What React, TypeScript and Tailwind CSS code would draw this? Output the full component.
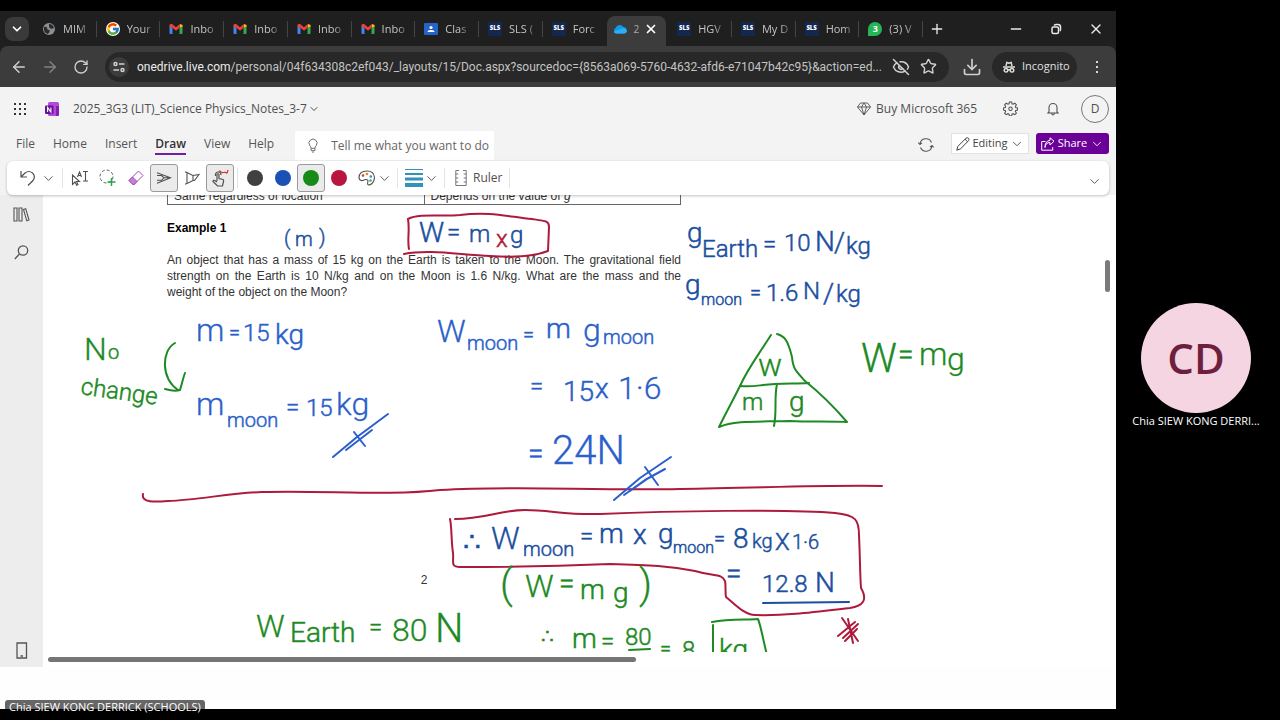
import type { ReactNode } from "react";
import { ArrowLeft, ArrowRight, ChevronDown, Download, EyeOff, Minus, Plus, RotateCw, Star, X } from "lucide-react";
import { FcGoogle } from "react-icons/fc";

// Pen colours available in the Draw ribbon
const NAVY = "#1b4f9f";
const BLUE = "#2b5fcb";
const GREEN = "#1d8a24";
const RED = "#ad1a3c";

type Ink = { t: string; x: number; y: number; s: number; c: string; r?: number };

// Handwritten notes on the page, in canvas coordinates
const notes: Ink[] = [
  { t: "(", x: 284, y: 245, s: 20, c: NAVY },
  { t: "m", x: 295, y: 246, s: 20, c: NAVY },
  { t: ")", x: 319, y: 244, s: 20, c: NAVY },

  { t: "W", x: 419, y: 242, s: 28, c: NAVY },
  { t: "=", x: 447, y: 240, s: 24, c: NAVY },
  { t: "m", x: 469, y: 242, s: 24, c: NAVY },
  { t: "x", x: 496, y: 247, s: 24, c: RED },
  { t: "g", x: 510, y: 243, s: 24, c: NAVY },

  { t: "g", x: 687, y: 242, s: 28, c: NAVY },
  { t: "Earth", x: 702, y: 257, s: 24, c: NAVY },
  { t: "=", x: 763, y: 252, s: 24, c: NAVY },
  { t: "10", x: 784, y: 251, s: 24, c: NAVY },
  { t: "N", x: 815, y: 251, s: 28, c: NAVY },
  { t: "/", x: 834, y: 252, s: 28, c: NAVY },
  { t: "kg", x: 846, y: 254, s: 24, c: NAVY },

  { t: "g", x: 685, y: 294, s: 28, c: NAVY },
  { t: "moon", x: 701, y: 305, s: 16, c: NAVY },
  { t: "=", x: 750, y: 299, s: 20, c: NAVY },
  { t: "1.6", x: 766, y: 301, s: 24, c: NAVY },
  { t: "N", x: 803, y: 299, s: 24, c: NAVY },
  { t: "/", x: 823, y: 303, s: 28, c: NAVY },
  { t: "kg", x: 836, y: 302, s: 24, c: NAVY },

  { t: "m", x: 196, y: 341, s: 32, c: BLUE },
  { t: "=", x: 229, y: 339, s: 20, c: BLUE },
  { t: "15", x: 243, y: 341, s: 24, c: BLUE },
  { t: "kg", x: 275, y: 344, s: 28, c: BLUE },

  { t: "m", x: 196, y: 415, s: 32, c: BLUE },
  { t: "moon", x: 227, y: 427, s: 20, c: BLUE },
  { t: "=", x: 286, y: 415, s: 24, c: BLUE },
  { t: "15", x: 306, y: 416, s: 24, c: BLUE },
  { t: "kg", x: 336, y: 415, s: 32, c: BLUE },

  { t: "W", x: 437, y: 342, s: 32, c: BLUE },
  { t: "moon", x: 467, y: 350, s: 20, c: BLUE },
  { t: "=", x: 523, y: 341, s: 20, c: BLUE },
  { t: "m", x: 546, y: 338, s: 28, c: BLUE },
  { t: "g", x: 583, y: 341, s: 32, c: BLUE },
  { t: "moon", x: 603, y: 344, s: 20, c: BLUE },

  { t: "=", x: 530, y: 394, s: 24, c: BLUE },
  { t: "15", x: 563, y: 401, s: 28, c: BLUE },
  { t: "x", x: 595, y: 398, s: 28, c: BLUE },
  { t: "1·6", x: 618, y: 399, s: 32, c: BLUE },

  { t: "=", x: 528, y: 463, s: 28, c: BLUE },
  { t: "24N", x: 552, y: 464, s: 40, c: BLUE },

  { t: "N", x: 84, y: 360, s: 32, c: GREEN },
  { t: "o", x: 108, y: 359, s: 20, c: GREEN },
  { t: "change", x: 80, y: 394, s: 24, c: GREEN, r: 8 },

  { t: "w", x: 758, y: 376, s: 32, c: GREEN },
  { t: "m", x: 742, y: 410, s: 24, c: GREEN },
  { t: "g", x: 789, y: 411, s: 28, c: GREEN },
  { t: "W", x: 861, y: 372, s: 40, c: GREEN },
  { t: "=", x: 898, y: 364, s: 28, c: GREEN },
  { t: "m", x: 919, y: 365, s: 32, c: GREEN },
  { t: "g", x: 947, y: 370, s: 32, c: GREEN },

  { t: "∴", x: 463, y: 551, s: 28, c: NAVY },
  { t: "W", x: 491, y: 549, s: 32, c: NAVY },
  { t: "moon", x: 523, y: 556, s: 20, c: NAVY },
  { t: "=", x: 580, y: 544, s: 24, c: NAVY },
  { t: "m", x: 599, y: 543, s: 28, c: NAVY },
  { t: "x", x: 633, y: 544, s: 28, c: NAVY },
  { t: "g", x: 658, y: 543, s: 28, c: NAVY },
  { t: "moon", x: 673, y: 553, s: 16, c: NAVY },
  { t: "=", x: 714, y: 545, s: 20, c: NAVY },
  { t: "8", x: 733, y: 548, s: 28, c: NAVY },
  { t: "kg", x: 752, y: 548, s: 20, c: NAVY },
  { t: "X", x: 775, y: 550, s: 24, c: NAVY },
  { t: "1·6", x: 792, y: 549, s: 20, c: NAVY },
  { t: "=", x: 726, y: 583, s: 28, c: NAVY },
  { t: "12.8", x: 762, y: 592, s: 24, c: NAVY },
  { t: "N", x: 815, y: 592, s: 28, c: NAVY },

  { t: "(", x: 500, y: 598, s: 40, c: GREEN },
  { t: "W", x: 525, y: 597, s: 32, c: GREEN },
  { t: "=", x: 559, y: 593, s: 28, c: GREEN },
  { t: "m", x: 580, y: 599, s: 28, c: GREEN },
  { t: "g", x: 613, y: 602, s: 28, c: GREEN },
  { t: ")", x: 639, y: 598, s: 40, c: GREEN },

  { t: "W", x: 256, y: 637, s: 32, c: GREEN },
  { t: "Earth", x: 290, y: 642, s: 28, c: GREEN },
  { t: "=", x: 369, y: 635, s: 24, c: GREEN },
  { t: "80", x: 392, y: 641, s: 32, c: GREEN },
  { t: "N", x: 435, y: 642, s: 40, c: GREEN },

  { t: "∴", x: 541, y: 643, s: 20, c: GREEN },
  { t: "m", x: 572, y: 648, s: 28, c: GREEN },
  { t: "=", x: 601, y: 649, s: 24, c: GREEN },
  { t: "80", x: 625, y: 645, s: 24, c: GREEN },
  { t: "=", x: 660, y: 655, s: 20, c: GREEN },
  { t: "8", x: 682, y: 658, s: 24, c: GREEN },
  { t: "kg", x: 719, y: 659, s: 28, c: GREEN },
];

// Boxes, arrows, underlines and the formula triangle
const strokes = [
  { c: RED, d: "M408 219 C410 230 407 240 409 249 M408 219 C420 213 440 217 460 215 C490 211 510 217 532 219 C546 221 549 221 549 227 L548 251 C535 256 515 258 490 256 C460 255 430 249 404 254" },
  { c: RED, d: "M143 494 C141 503 155 502 168 501 C198 500 230 493 262 492 C320 490 390 496 440 490 C520 485 590 491 680 489 C760 488 820 485 882 486" },
  { c: RED, d: "M455 519 C485 519 500 510 525 510 C550 510 565 515 600 514 C670 511 790 509 835 513 C856 515 859 520 859 535 C860 555 860 575 861 588 C868 600 863 606 850 608 C815 612 785 616 755 615 C745 615 737 606 726 597 C725 592 726 585 725 581 C721 573 715 577 695 571 C670 566 650 565 610 564 C560 566 500 567 460 567 C450 567 454 562 453 553 C451 540 452 528 450 519" },
  { c: RED, d: "M842 618 L858 641 M838 636 L855 622 M843 638 L858 624 M848 619 L853 643 M845 641 L857 629" },
  { c: BLUE, d: "M333 457 L357 437 L388 414 M346 450 L372 430 M354 432 L365 446" },
  { c: BLUE, d: "M614 500 L640 478 L671 457 M624 495 L645 480 L665 469 M630 491 L650 477 M645 467 L658 485" },
  { c: NAVY, d: "M763 603 L849 602" },
  { c: GREEN, d: "M175 343 C161 351 161 378 178 390 M165 389 C172 391 177 391 180 390 C182 384 183 378 185 373" },
  { c: GREEN, d: "M771 335 C755 360 747 370 740 386 C733 400 725 415 719 427 C735 420 760 422 790 421 C810 422 830 421 847 422 C835 408 820 393 805 381 C796 371 793 369 792 357 C788 341 785 336 777 334" },
  { c: GREEN, d: "M740 386 C750 387 755 386 763 385 C780 383 795 384 809 383 M777 384 C774 398 777 412 774 426" },
  { c: GREEN, d: "M629 650 L650 649 M713 625 L713 655 M712 622 C730 619 745 620 758 619 C761 626 763 640 767 655" },
];

const GmailIcon = () => (
  <svg viewBox="0 0 14 12" className="h-3 w-[14px] shrink-0">
    <path d="M0.500 3v7q0 1 1 1h2V4.500z" fill="#4285f4" />
    <path d="M13.500 3v7q0 1-1 1h-2V4.500z" fill="#34a853" />
    <path d="M10.500 4.500V1.500q2-1 3 0.800v1.500z" fill="#fbbc04" />
    <path d="M0.500 3.800V2q0.800-2 3-0.800L7 4.200l3.500-3v3.600L7 7.700 3.500 4.800z" fill="#ea4335" />
  </svg>
);

const SlsIcon = () => (
  <span className="flex h-[14px] w-[14px] shrink-0 items-center justify-center bg-[#14284f] text-[6px] font-extrabold text-white">
    SLS
  </span>
);

const GlobeIcon = () => (
  <svg viewBox="0 0 14 14" className="h-[14px] w-[14px] shrink-0">
    <circle cx="7" cy="7" r="6" fill="#8a8f94" />
    <path d="M2 5q3-1 3 1t2 2-1 4Q2 11 2 7zM7 2q4 0 5 4l-3 1-2-2z" fill="#2a2b2c" />
  </svg>
);

const ClassroomIcon = () => (
  <svg viewBox="0 0 14 14" className="h-[14px] w-[14px] shrink-0">
    <rect y="1" width="14" height="12" rx="1" fill="#2563c9" />
    <circle cx="7" cy="5.500" r="1.600" fill="#fff" />
    <path d="M3.500 10q0-2 3.500-2t3.500 2z" fill="#fff" />
  </svg>
);

const CloudIcon = () => (
  <svg viewBox="0 0 14 10" className="h-[10px] w-[14px] shrink-0">
    <path d="M3 9.500a3 3 0 0 1-.5-5.500A4.500 4.500 0 0 1 10.500 3a3.300 3.300 0 0 1 .5 6.500z" fill="#1196e8" />
    <path d="M3 9.500Q1 9 1 7.500L10 4q4 1 4 3.200-.5 2.300-3 2.300z" fill="#28b0f5" />
  </svg>
);

const WhatsappIcon = () => (
  <span className="flex h-[14px] w-[14px] shrink-0 items-center justify-center rounded-full rounded-bl-sm bg-[#25b557] text-[9px] font-bold text-white">
    3
  </span>
);

const tabs: { icon: ReactNode; label: string; active?: boolean }[] = [
  { icon: <GlobeIcon />, label: "MIM" },
  { icon: <FcGoogle className="h-[14px] w-[14px] shrink-0 rounded-full bg-white" />, label: "Your" },
  { icon: <GmailIcon />, label: "Inbo" },
  { icon: <GmailIcon />, label: "Inbo" },
  { icon: <GmailIcon />, label: "Inbo" },
  { icon: <GmailIcon />, label: "Inbo" },
  { icon: <ClassroomIcon />, label: "Clas" },
  { icon: <SlsIcon />, label: "SLS (" },
  { icon: <SlsIcon />, label: "Forc" },
  { icon: <CloudIcon />, label: "2", active: true },
  { icon: <SlsIcon />, label: "HGV" },
  { icon: <SlsIcon />, label: "My D" },
  { icon: <SlsIcon />, label: "Hom" },
  { icon: <WhatsappIcon />, label: "(3) V" },
];

function BrowserBar() {
  return (
    <header className="bg-[#1f1f1f]">
      <div className="flex h-[35px] items-center pl-[5px]">
        <button aria-label="Search tabs" className="flex h-6 w-6 items-center justify-center rounded-lg bg-[#3a3a3a] text-white">
          <ChevronDown size={14} strokeWidth={3} />
        </button>
        <nav className="ml-1 flex h-full min-w-0 flex-1 items-center">
          {tabs.map((tab, i) =>
            tab.active ? (
              <div key={i} className="flex h-full min-w-0 flex-1 items-end pr-[7px] pl-[2px]">
                <div className="flex h-[30px] w-[59px] shrink-0 items-center rounded-t-lg bg-[#3c3c3c] pb-1 pl-[6px] text-white">
                  {tab.icon}
                  <span className="ml-[6px] text-[10px] text-[#a8a8a8]">{tab.label}</span>
                  <button aria-label="Close tab" className="ml-[5px]">
                    <X size={14} strokeWidth={3} />
                  </button>
                </div>
              </div>
            ) : (
              <button key={i} className={`flex h-4 min-w-0 flex-1 items-center pl-[9px] ${i === 8 ? "" : "border-r border-[#454545]"}`}>
                {tab.icon}
                <span className="ml-[7px] text-left text-[11px] leading-4 whitespace-nowrap text-[#c4c4c4] [mask-image:linear-gradient(to_right,black_70%,#0006)]">
                  {tab.label}
                </span>
              </button>
            )
          )}
        </nav>
        <div className="flex w-[193px] shrink-0 items-center text-[#e8e8e8]">
          <button aria-label="New tab" className="ml-[6px]">
            <Plus size={16} />
          </button>
          <button aria-label="Minimise" className="ml-[63px]">
            <Minus size={16} />
          </button>
          <button aria-label="Restore" className="ml-[26px]">
            <svg viewBox="0 0 12 12" className="h-3 w-3" fill="none" stroke="currentColor" strokeWidth="1.500">
              <rect x="2" y="4" width="6.500" height="6.500" rx="1.500" />
              <path d="M4 2.500q1-1 2.500-1H8Q10.500 1.500 10.500 4v2Q10.500 7.500 10 8" />
            </svg>
          </button>
          <button aria-label="Close" className="ml-[26px]">
            <X size={16} />
          </button>
        </div>
      </div>

      <div className="flex h-[41px] items-center rounded-t-lg bg-[#3c3c3c] pl-[10px] text-[#d0d0d0]">
        <button aria-label="Back">
          <ArrowLeft size={18} />
        </button>
        <button aria-label="Forward" className="ml-[13px] text-[#828282]">
          <ArrowRight size={18} />
        </button>
        <button aria-label="Reload" className="ml-[14px]">
          <RotateCw size={16} />
        </button>
        <div className="ml-4 flex h-[30px] min-w-0 flex-1 items-center rounded-full bg-[#282828] pr-3 pl-1">
          <span className="flex h-5 w-5 shrink-0 items-center justify-center rounded-full bg-[#3c3c3c]">
            <svg viewBox="0 0 12 12" className="h-3 w-3" fill="none" stroke="currentColor" strokeWidth="1.500">
              <circle cx="2.500" cy="3" r="1.500" />
              <path d="M6 3h5.500M.5 9H6" />
              <circle cx="9.500" cy="9" r="1.500" />
            </svg>
          </span>
          <p className="ml-2 min-w-0 flex-1 truncate font-['Roboto','Open_Sans',sans-serif] text-[12px] text-[#c4c4c4]">
            <span className="text-[#ececec]">onedrive.live.com</span>
            /personal/04f634308c2ef043/_layouts/15/Doc.aspx?sourcedoc={"{8563a069-5760-4632-afd6-e71047b42c95}"}&amp;action=ed...
          </p>
          <EyeOff size={18} className="ml-px shrink-0" />
          <Star size={17} className="ml-[10px] shrink-0" />
        </div>
        <button aria-label="Downloads" className="ml-[13px]">
          <Download size={20} />
        </button>
        <span className="ml-[10px] flex h-[30px] w-[85px] items-center gap-[7px] rounded-full bg-[#282828] pl-[11px] text-[11px] text-[#e0e0e0]">
          <svg viewBox="0 0 12 12" className="h-3 w-3 shrink-0" fill="none" stroke="currentColor" strokeWidth="1.400">
            <path d="M3 5l.8-3.500 2.200.7 2.200-.7L9 5M0 6h12" />
            <circle cx="3" cy="9.300" r="1.800" />
            <circle cx="9" cy="9.300" r="1.800" />
            <path d="M4.800 9q1.200-.6 2.400 0" />
          </svg>
          Incognito
        </span>
        <button aria-label="Browser menu" className="mr-[18px] ml-[19px] flex flex-col gap-[3px]">
          <i className="h-[2px] w-[2px] bg-[#d8d8d8]" />
          <i className="h-[2px] w-[2px] bg-[#d8d8d8]" />
          <i className="h-[2px] w-[2px] bg-[#d8d8d8]" />
        </button>
      </div>
    </header>
  );
}

function TitleBar() {
  return (
    <div className="flex h-[43px] items-center pr-[7px] pl-[14px] text-[#505050]">
      <button aria-label="App launcher" className="grid grid-cols-3 gap-[3px]">
        {Array.from({ length: 9 }, (_, i) => (
          <i key={i} className="h-[2px] w-[2px] bg-[#333]" />
        ))}
      </button>
      <svg viewBox="0 0 14 14" className="ml-[19px] h-[14px] w-[14px]">
        <rect x="3" width="11" height="14" rx="1.500" fill="#b44ad8" />
        <path d="M11 4h3v9l-1 1h-2z" fill="#8020b8" />
        <rect y="3.500" width="8.500" height="8.500" rx="1" fill="#6a1099" />
        <path d="M2.600 10V5.500l3.300 4.500V5.500" fill="none" stroke="#fff" strokeWidth="1.100" />
      </svg>
      <button className="ml-[14px] flex items-center gap-px text-xs">
        2025_3G3 (LIT)_Science Physics_Notes_3-7
        <ChevronDown size={12} />
      </button>
      <button className="ml-auto flex items-center gap-[5px] text-xs">
        <svg viewBox="0 0 14 14" className="h-[14px] w-[14px]" fill="none" stroke="currentColor" strokeWidth="0.900">
          <path d="M3.500 1h7L13.500 5 7 13 .5 5zM.5 5h13M4.500 5L7 13 9.500 5 7 1z" />
        </svg>
        Buy Microsoft 365
      </button>
      <button aria-label="Settings" className="ml-[26px]">
        <svg viewBox="0 0 16 16" className="h-[15px] w-[15px]" fill="none" stroke="currentColor" strokeWidth="1.100">
          <path d="M6.800 1h2.400l.4 2 1.200.5 1.800-1.100 1.700 1.700-1.100 1.800.4 1 2 .5v2.200l-2 .5-.4 1.100 1.100 1.700-1.700 1.700-1.800-1.100-1.200.5-.4 2H6.800l-.4-2-1.200-.5-1.800 1.100-1.700-1.700 1.100-1.700-.4-1.100-2-.5V7.400l2-.5.4-1-1.100-1.800 1.700-1.700 1.800 1.100L6.400 3z" />
          <circle cx="8" cy="8.300" r="1.800" />
        </svg>
      </button>
      <button aria-label="Notifications" className="ml-7">
        <svg viewBox="0 0 14 14" className="h-[14px] w-[14px]" fill="none" stroke="currentColor" strokeWidth="1.100">
          <path d="M3 10V5.500a4 4 0 0 1 8 0V10l1 1H2zM5.500 11.500q1.500 3 3 0" />
        </svg>
      </button>
      <button aria-label="Account" className="ml-[21px] flex h-7 w-7 items-center justify-center rounded-full border border-[#777] text-xs">
        D
      </button>
    </div>
  );
}

function MenuRow() {
  return (
    <div className="flex h-[31px] items-start pt-px pr-[7px] pl-4 text-xs text-[#555]">
      <nav className="flex h-[26px] items-center gap-[18px]">
        <button>File</button>
        <button>Home</button>
        <button>Insert</button>
        <button className="relative font-semibold text-[#333] after:absolute after:inset-x-0 after:-bottom-[3px] after:h-[2px] after:bg-[#6f1fa0]">Draw</button>
        <button>View</button>
        <button>Help</button>
      </nav>
      <label className="ml-[21px] flex h-[29px] w-[199px] items-center bg-white pl-3">
        <svg viewBox="0 0 12 16" className="h-[15px] w-3 shrink-0" fill="none" stroke="#666" strokeWidth="1">
          <path d="M4 11Q4 9.500 2.500 8a4.300 4.300 0 1 1 7 0Q8 9.500 8 11zM4 11v2.500h4V11M5 15h2" />
        </svg>
        <input aria-label="Search commands" placeholder="Tell me what you want to do" className="ml-3 w-40 text-[12px] placeholder:text-[#666]" />
      </label>
      <button aria-label="Sync" className="mt-[6px] ml-auto">
        <svg viewBox="0 0 16 16" className="h-4 w-4" fill="none" stroke="currentColor" strokeWidth="1.100">
          <path d="M2 7a6 6 0 0 1 11.500-1.500M14 9A6 6 0 0 1 2.500 10.500M.3 5.500L2 7.500l2-1.700M12 10.200l2-1.700 1.700 2" />
        </svg>
      </button>
      <button className="mt-[2px] ml-[17px] flex h-[21px] w-[78px] items-center justify-center gap-[2px] border border-[#e2e2e2] bg-white text-[11px] text-[#444]">
        <svg viewBox="0 0 14 14" className="h-[14px] w-[14px]" fill="none" stroke="currentColor" strokeWidth="1">
          <path d="M.8 13.200l1-3.800L10 1.200q1.300-1 2.400 0t.2 2.400L4.500 11.900zM9 2.200l2.700 2.600" />
        </svg>
        Editing
        <ChevronDown size={14} strokeWidth={1.5} />
      </button>
      <button className="mt-[2px] ml-[7px] flex h-[21px] w-[73px] items-center justify-center gap-[3px] rounded-[3px] bg-[#6b0099] text-[11px] text-white">
        <svg viewBox="0 0 14 14" className="h-[14px] w-[14px]" fill="none" stroke="currentColor" strokeWidth="1">
          <path d="M4.500 4.500h-3.800v8.700h11v-3M4 10.500q.5-5 5-5V8l4-3.800L9 .8v2.500Q4 4 4 10.500z" />
        </svg>
        Share
        <ChevronDown size={14} strokeWidth={1.5} />
      </button>
    </div>
  );
}

const Divider = () => <i className="mx-[3px] h-5 w-px bg-[#e4e4e4]" />;

// One ribbon button; pressed ones get the grey frame
function Tool({ label, pressed, children }: { label: string; pressed?: boolean; children: ReactNode }) {
  return (
    <button
      aria-label={label}
      className={`flex h-7 w-7 items-center justify-center ${pressed ? "rounded-[3px] border border-[#9a9a9a] bg-[#ebebeb]" : ""}`}
    >
      {children}
    </button>
  );
}

function Ribbon() {
  return (
    <div className="relative z-10 mx-[7px] flex h-[34px] items-center rounded-md bg-white pl-[7px] text-[#505050] shadow-[0_1px_3px_rgba(0,0,0,0.25)]">
      <Tool label="Undo">
        <svg viewBox="0 0 16 16" className="h-4 w-4" fill="none" stroke="currentColor" strokeWidth="1.200">
          <path d="M1 1v6h6M1 7l4-4q4-3 7.500 0t.5 7.500L8 15.500" />
        </svg>
      </Tool>
      <button aria-label="Undo history" className="mr-[3px] -ml-px">
        <ChevronDown size={15} strokeWidth={1.5} />
      </button>
      <Divider />
      <Tool label="Select objects or type">
        <svg viewBox="0 0 18 16" className="h-4 w-[18px]" fill="none" stroke="currentColor" strokeWidth="1.100">
          <path d="M1.500 5v9.500L4 12l1.700 3.300 1.300-.7L5.500 11.500H8.500z" />
          <path d="M12 1.500h5M12 11h5M14.500 1.500V11M6.500 7L8.500 2l2 5M7.300 5.500h2.500" />
        </svg>
      </Tool>
      <Tool label="Lasso select">
        <svg viewBox="0 0 18 18" className="h-[18px] w-[18px]" fill="none">
          <circle cx="7.500" cy="7.500" r="6.500" stroke="#666" strokeDasharray="3 2" />
          <path d="M12.500 9v8M8.500 13h8" stroke="#2aa44c" strokeWidth="1.500" />
        </svg>
      </Tool>
      <Tool label="Eraser">
        <svg viewBox="0 0 16 16" className="h-4 w-4" fill="none" stroke="#a04ab5" strokeWidth="1">
          <path d="M1 10.500L10.500 1 15 5.500 5.500 15z" fill="#fff" />
          <path d="M1 10.500L4.500 7 9 11.500 5.500 15z" fill="#c680d6" />
        </svg>
      </Tool>
      <Tool label="Pen" pressed>
        <svg viewBox="0 0 16 12" className="h-3 w-4" fill="none" stroke="currentColor" strokeWidth="1.100">
          <path d="M1 .8l13.500 5L1 11.200M1 3.500h4.500L8 5.800 5.500 8.300H1M8 5.800h6" />
        </svg>
      </Tool>
      <Tool label="Highlighter">
        <svg viewBox="0 0 16 14" className="h-[14px] w-4" fill="none" stroke="currentColor" strokeWidth="1.100">
          <path d="M1 .8L4 2l5 2.500v5L4 12l-3 1.200M3 2v10M9 4.500l6-1-4.500 6H9" />
        </svg>
      </Tool>
      <Tool label="Draw with touch" pressed>
        <svg viewBox="0 0 18 18" className="h-[18px] w-[18px]" fill="none" stroke="currentColor" strokeWidth="1.200">
          <path d="M6 12V5.500q1-1.500 2 0v4l4 1q1 .5.500 2L11.500 17H6.500L2 12.500q.2-1.800 1.800-1L6 13M4.500 7Q4 3.500 7 3t3 3" />
          <path d="M8.500 1.500Q10 4 12.500 3.500T15.500 4 17 1" stroke="#d13438" />
        </svg>
      </Tool>
      <Divider />
      <Tool label="Black pen"><i className="h-4 w-4 rounded-full bg-[#404040]" /></Tool>
      <Tool label="Blue pen"><i className="h-4 w-4 rounded-full bg-[#1b50b5]" /></Tool>
      <Tool label="Green pen" pressed><i className="h-4 w-4 rounded-full bg-[#178a17]" /></Tool>
      <Tool label="Red pen"><i className="h-4 w-4 rounded-full bg-[#b9163f]" /></Tool>
      <Tool label="More colours">
        <svg viewBox="0 0 18 16" className="h-4 w-[18px]" fill="none" stroke="currentColor" strokeWidth="1.100">
          <path d="M1 8Q1 1 9 1q7 0 7.500 6.500Q16 12 14 13.500q-1.500 1.500-3.500 1.500-1.500-.8-.8-2.500 1-2.500-1.200-3-1.500-.3-3 .8Q2 11.500 1 8z" />
          <circle cx="5" cy="5.500" r=".8" stroke="#c0392b" />
          <circle cx="9" cy="4" r=".8" stroke="#d68910" />
          <circle cx="12.800" cy="6.500" r=".8" stroke="#2e86c1" />
          <circle cx="12.500" cy="10.500" r=".8" stroke="#27ae60" />
        </svg>
      </Tool>
      <button aria-label="Colour list" className="mr-[2px] -ml-1">
        <ChevronDown size={15} strokeWidth={1.5} />
      </button>
      <Divider />
      <button aria-label="Thickness" className="ml-1 flex items-center gap-px">
        <svg viewBox="0 0 18 18" className="h-[18px] w-[18px]" fill="#3292b8">
          <path d="M0 0h18v1H0zM0 4h18v2H0zM0 8.500h18v3H0zM0 14h18v4H0z" />
        </svg>
        <ChevronDown size={15} strokeWidth={1.5} />
      </button>
      <i className="ml-[5px] h-5 w-px bg-[#e4e4e4]" />
      <button className="mr-[7px] ml-[10px] flex items-center gap-[6px] text-xs">
        <svg viewBox="0 0 12 16" className="h-4 w-3" fill="none" stroke="#777" strokeWidth="1">
          <path d="M4 .5H.8v15h10.400V.5H8M.8 4h2.500M.8 8h2.500M.8 12h2.500M11.200 4H8.700M11.200 8H8.700M11.200 12H8.700" />
        </svg>
        Ruler
      </button>
      <i className="h-5 w-px bg-[#e4e4e4]" />
      <button aria-label="Collapse ribbon" className="mt-[6px] mr-[7px] ml-auto">
        <ChevronDown size={15} strokeWidth={1.5} />
      </button>
    </div>
  );
}

function NotePage() {
  return (
    <main className="relative min-w-0 flex-1 overflow-hidden bg-white font-['Liberation_Sans',sans-serif] text-[12px] leading-4 text-[#333]">
      {/* Printed worksheet */}
      <article className="-mt-2 ml-[124px] w-[514px]">
        <table className="w-full border-collapse">
          <tbody>
            <tr>
              <td className="h-[17px] w-1/2 border border-[#666] px-[6px]">Same regardless of location</td>
              <td className="h-[17px] w-1/2 border border-[#666] px-[6px]">
                Depends on the value of <i>g</i>
              </td>
            </tr>
          </tbody>
        </table>
        <h2 className="mt-[15px] font-bold text-black">Example 1</h2>
        <p className="mt-4">
          <span className="block [text-align-last:justify]">An object that has a mass of 15 kg on the Earth is taken to the Moon. The gravitational field</span>
          <span className="block [text-align-last:justify]">strength on the Earth is 10 N/kg and on the Moon is 1.6 N/kg. What are the mass and the</span>
          <span className="block">weight of the object on the Moon?</span>
        </p>
        <p className="mt-[272px] text-center">2</p>
      </article>

      {/* Ink layer; the thin outline gives small and big letters about the same pen width */}
      <svg viewBox="43 195 1010 457" width="1010" height="457" className="absolute top-0 left-0 font-['Roboto',sans-serif] font-light">
        {strokes.map((s, i) => (
          <path key={i} d={s.d} fill="none" stroke={s.c} strokeWidth="2" strokeLinecap="round" strokeLinejoin="round" />
        ))}
        {notes.map((n, i) => (
          <text
            key={i}
            x={n.x}
            y={n.y}
            fontSize={n.s}
            fill={n.c}
            stroke={n.c}
            strokeWidth={n.s > 28 ? 0.3 : 0.5}
            transform={n.r ? `rotate(${n.r} ${n.x} ${n.y})` : undefined}
          >
            {n.t}
          </text>
        ))}
      </svg>

      {/* Scrollbars */}
      <i className="absolute top-[65px] right-[6px] h-8 w-[5px] rounded-full bg-[#7a7a7a]" />
      <i className="absolute bottom-[5px] left-[5px] h-[5px] w-[588px] rounded-full bg-[#757575]" />
    </main>
  );
}

function App() {
  return (
    <div className="relative flex h-screen bg-black font-['Open_Sans','Noto_Sans',sans-serif]">
      <section className="my-[11px] flex min-w-0 flex-1 flex-col bg-[#f3f3f3]">
        <BrowserBar />
        <TitleBar />
        <MenuRow />
        <Ribbon />
        <div className="flex min-h-0 flex-1">
          <aside className="flex w-[43px] shrink-0 flex-col items-center bg-[#ededed] pt-3 pb-2 text-[#555]">
            <button aria-label="Notebooks">
              <svg viewBox="0 0 17 15" className="h-[15px] w-[17px]" fill="none" stroke="currentColor" strokeWidth="1.100">
                <path d="M1 1h3v13H1zM6 1h3v13H6zM10.500 2.500l2.200-.8L16 13l-2.200.8z" />
              </svg>
            </button>
            <button aria-label="Search" className="mt-[23px]">
              <svg viewBox="0 0 15 15" className="h-[15px] w-[15px]" fill="none" stroke="currentColor" strokeWidth="1.300">
                <circle cx="9" cy="5.500" r="4.700" />
                <path d="M5.500 9L.8 14" />
              </svg>
            </button>
            <button aria-label="Page view" className="mt-auto">
              <svg viewBox="0 0 12 17" className="h-[17px] w-3" fill="none" stroke="currentColor" strokeWidth="1.300">
                <path d="M1 1h9.500v15H1zM4.500 14h2.500" />
              </svg>
            </button>
          </aside>
          <NotePage />
        </div>
        <div className="h-[42px] shrink-0 bg-[#fefefe]" />
      </section>

      {/* Participant tile */}
      <aside className="flex w-[164px] shrink-0 flex-col items-center justify-center pt-3 pr-1">
        <div className="flex h-[110px] w-[110px] items-center justify-center rounded-full bg-[#f4d5e1] text-[42px] font-semibold text-[#6e1f3e]">
          CD
        </div>
        <p className="text-[11px] text-white">Chia SIEW KONG DERRI...</p>
      </aside>

      <p className="absolute bottom-[6px] left-[5px] rounded-[3px] bg-black/60 px-1 text-[11px] leading-[14px] text-white">
        Chia SIEW KONG DERRICK (SCHOOLS)
      </p>
    </div>
  );
}

export default App;
